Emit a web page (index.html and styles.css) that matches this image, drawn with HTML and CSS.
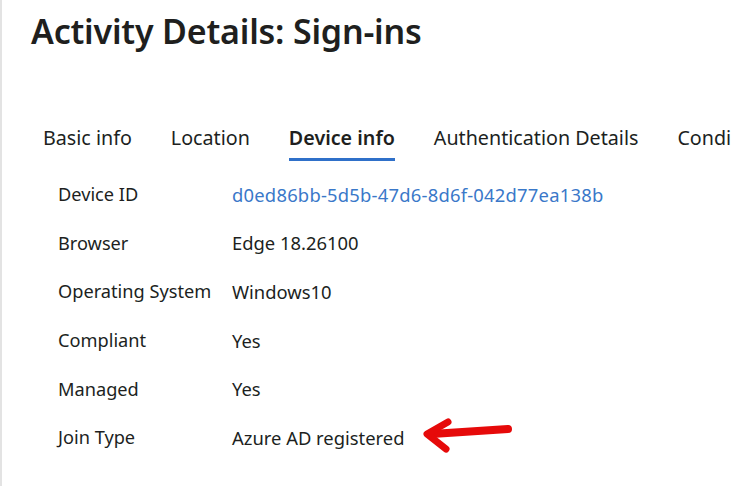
FILE: index.html
```html
<!DOCTYPE html>
<html lang="en">
<head>
  <meta charset="UTF-8" />
  <title>Activity Details: Sign-ins</title>
  <link rel="stylesheet" href="styles.css">
</head>
<body>
  <div class="panel">
    <h1>Activity Details: Sign-ins</h1>

    <!-- tabs -->
    <div class="tabs">
      <span class="tab">Basic info</span>
      <span class="tab">Location</span>
      <span class="tab active">Device info</span>
      <span class="tab">Authentication Details</span>
      <span class="tab">Conditional Access</span>
    </div>

    <!-- device info -->
    <div class="details">
      <div class="row"><span class="label">Device ID</span><a class="value link" href="#">d0ed86bb-5d5b-47d6-8d6f-042d77ea138b</a></div>
      <div class="row"><span class="label">Browser</span><span class="value">Edge 18.26100</span></div>
      <div class="row"><span class="label">Operating System</span><span class="value">Windows10</span></div>
      <div class="row"><span class="label">Compliant</span><span class="value">Yes</span></div>
      <div class="row"><span class="label">Managed</span><span class="value">Yes</span></div>
      <div class="row"><span class="label">Join Type</span><span class="value">Azure AD registered</span>
        <svg class="arrow" width="94" height="36" viewBox="0 0 94 36">
          <path d="M86 11 L10 16" stroke="#e60a0a" stroke-width="8" stroke-linecap="round" fill="none"/>
          <path d="M26 4 L5 16 L24 31" stroke="#e60a0a" stroke-width="7" stroke-linecap="round" stroke-linejoin="round" fill="none"/>
        </svg>
      </div>
    </div>
  </div>
</body>
</html>
```

FILE: styles.css
```css
* { box-sizing: border-box; margin: 0; padding: 0; }
body {
  font-family: 'Noto Sans', 'Segoe UI', sans-serif;
  background: #fff;
  color: #201f1e;
  width: 731px;
  height: 486px;
  overflow: hidden;
}
.panel {
  border-left: 2px solid #e3e3e3;
  height: 100%;
  padding-left: 29px;
}
h1 {
  font-size: 34px;
  font-weight: 600;
  padding-top: 8px;
  letter-spacing: -0.2px;
}
.tabs {
  display: flex;
  gap: 39px;
  margin-top: 70px;
  padding-left: 12px;
  white-space: nowrap;
  font-size: 19.7px;
}
.tab {
  padding-bottom: 7px;
  border-bottom: 3px solid transparent;
}
.tab.active {
  font-weight: 600;
  border-bottom-color: #2f70c9;
}
.details {
  padding-left: 27px;
  margin-top: 9px;
}
.row {
  display: flex;
  align-items: center;
  height: 48.6px;
  font-size: 18.2px;
  position: relative;
}
.label { width: 174px; }
.value { font-size: 18.4px; }
.link {
  color: #3a78c9;
  text-decoration: none;
  letter-spacing: 0.22px;
}
.arrow {
  position: absolute;
  left: 364px;
  top: 5px;
}
```
